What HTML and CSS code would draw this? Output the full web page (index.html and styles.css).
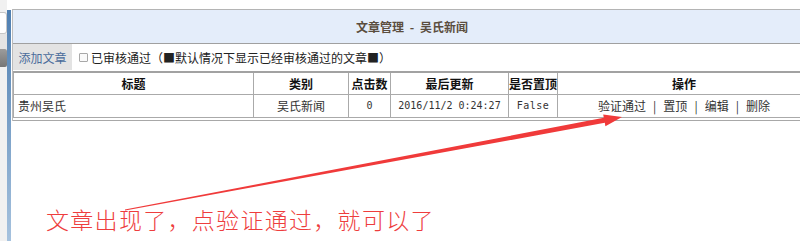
FILE: index.html
```html
<!DOCTYPE html>
<html lang="zh-CN">
<head>
  <meta charset="UTF-8" />
  <title>文章管理 - 吴氏新闻</title>
  <link rel="stylesheet" href="styles.css">
</head>
<body>
  <!-- left menu frame, only its edge is visible -->
  <div class="side">
    <div class="side-input"></div>
    <div class="side-gap"></div>
    <div class="side-btn"></div>
  </div>
  <div class="splitter"></div>

  <div class="main">
    <div class="panel">
      <div class="title-bar">文章管理 <span class="dash">-</span> 吴氏新闻</div>

      <div class="toolbar">
        <button class="btn-add">添加文章</button>
        <label class="check">
          <input type="checkbox" />
          <span>已审核通过（■默认情况下显示已经审核通过的文章■）</span>
        </label>
      </div>

      <div class="table-wrap">
        <table class="grid">
          <colgroup>
            <col class="c-title" />
            <col class="c-type" />
            <col class="c-hits" />
            <col class="c-date" />
            <col class="c-top" />
            <col class="c-ops" />
          </colgroup>
          <thead>
            <tr>
              <th>标题</th>
              <th>类别</th>
              <th>点击数</th>
              <th>最后更新</th>
              <th>是否置顶</th>
              <th>操作</th>
            </tr>
          </thead>
          <tbody>
            <tr>
              <td class="left">贵州吴氏</td>
              <td>吴氏新闻</td>
              <td class="mono">0</td>
              <td class="mono">2016/11/2 0:24:27</td>
              <td class="mono spaced">False</td>
              <td class="ops">
                <a>验证通过</a><span class="sep">|</span><a>置顶</a><span class="sep">|</span><a>编辑</a><span class="sep">|</span><a>删除</a>
              </td>
            </tr>
          </tbody>
        </table>
      </div>
    </div>
  </div>

  <!-- annotation drawn over the screenshot -->
  <svg class="arrow" width="800" height="241" viewBox="0 0 800 241">
    <polygon points="124.9,209.5 603.8,117.8 603.2,114.4 622,117 605.4,126.2 604.8,122.8 125.1,210.5" fill="#f03a3a" />
  </svg>
  <div class="note">文章出现了，点验证通过，就可以了</div>
</body>
</html>
```

FILE: styles.css
```css
body {
  margin: 0;
  width: 800px;
  height: 241px;
  overflow: hidden;
  display: flex;
  position: relative;
  background: #fff;
  font-family: "Noto Sans CJK SC", "Liberation Sans", sans-serif;
  font-size: 12px;
  color: #333;
}

.side {
  width: 7px;
  flex: none;
  display: flex;
  flex-direction: column;
  background: #f1f1f1;
}

.side-input {
  margin-top: 12px;
  height: 20px;
  background: #fff;
  border: 1px solid #c6c6c6;
  border-left: none;
  border-radius: 0 3px 3px 0;
}

.side-gap {
  height: 15px;
  background: #e4e4e4;
}

.side-btn {
  height: 18px;
  background: linear-gradient(#9c9c9c, #767676);
  border-radius: 0 2px 2px 0;
}

.splitter {
  width: 4px;
  flex: none;
  margin-top: 10px;
  background: linear-gradient(#4f7fb1, #a6c2de);
}

.main {
  width: 799px;
  flex: none;
  margin: 9px 0 0 1px;
}

.panel {
  border-top: 1px solid #b4b4b4;
  border-left: 1px solid #bcbcbc;
}

.title-bar {
  height: 33px;
  background: #e4edfa;
  border-bottom: 1px solid #a0a0a0;
  display: flex;
  align-items: center;
  justify-content: center;
  color: #5b4d3e;
  font-weight: bold;
  white-space: pre;
}

.title-bar .dash {
  margin: 0 3px;
}

.toolbar {
  height: 26px;
  display: flex;
  align-items: center;
}

.btn-add {
  height: 26px;
  width: 59px;
  padding: 0;
  border: none;
  background: #e3e3e3;
  color: #4a6c9b;
  font: inherit;
}

.check {
  display: flex;
  align-items: center;
  margin-left: 7px;
  color: #222;
  font-size: 12px;
}

.check input {
  appearance: none;
  width: 9px;
  height: 9px;
  margin: 0 3px 0 0;
  border: 1px solid #a8a8a8;
  border-radius: 1px;
  background: #fafafa;
}

.table-wrap {
  margin-top: 1px;
  padding-bottom: 2px;
  border-bottom: 1px solid #a8a8a8;
}

.grid {
  width: 798px;
  table-layout: fixed;
  border-collapse: collapse;
  border-top: 2px solid #a2a2a2;
}

.c-title { width: 240px; }
.c-type { width: 95px; }
.c-hits { width: 42px; }
.c-date { width: 118px; }
.c-top { width: 49px; }

.grid th,
.grid td {
  border: 1px solid #aaa;
  padding: 0;
  text-align: center;
  line-height: 14px;
  white-space: nowrap;
}

.grid th {
  height: 21px;
  color: #111;
  font-weight: bold;
}

.grid td {
  height: 22px;
}

.grid td.left {
  text-align: left;
  padding-left: 4px;
}

.grid td.mono {
  font-family: "DejaVu Sans Mono", monospace;
  font-size: 10px;
}

.grid td.spaced {
  letter-spacing: 0.5px;
}

.ops .sep {
  margin: 0 7px;
}

.arrow {
  position: absolute;
  top: 0;
  left: 0;
  pointer-events: none;
}

.note {
  position: absolute;
  left: 46px;
  top: 204px;
  color: #ee3d3d;
  font-size: 23px;
  line-height: 30px;
  letter-spacing: 1.3px;
  font-weight: 300;
}
```
